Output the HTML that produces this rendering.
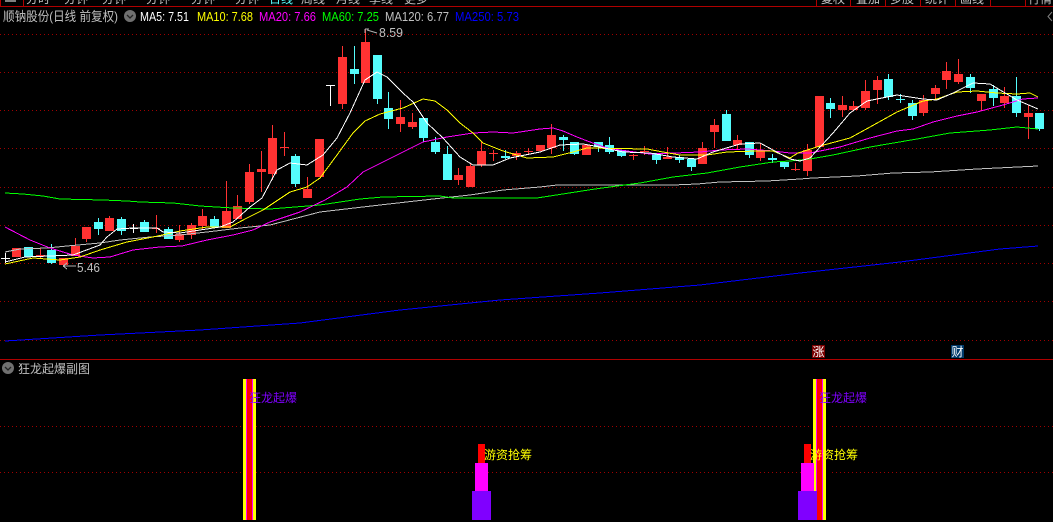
<!DOCTYPE html>
<html><head><meta charset="utf-8"><style>
html,body{margin:0;padding:0;background:#000;width:1053px;height:522px;overflow:hidden}
svg{display:block}
text{font-family:"WenQuanYi Zen Hei","Liberation Sans","Noto Sans CJK SC",sans-serif;font-size:12px}
text.m{font-family:"Liberation Sans",sans-serif;font-size:13px}
</style></head><body>
<svg width="1053" height="522" viewBox="0 0 1053 522" xmlns="http://www.w3.org/2000/svg">
<defs><pattern id="d" width="4" height="1" patternUnits="userSpaceOnUse"><rect width="1" height="1" fill="#a00000"/></pattern></defs>
<rect width="1053" height="522" fill="#000"/>
<!-- top tabs -->
<g fill="#c0c0c0" text-anchor="middle">
<text x="38" y="3">分时</text><text x="76" y="3">分钟</text><text x="114" y="3">分钟</text><text x="158" y="3">分钟</text><text x="203" y="3">分钟</text><text x="247" y="3">分钟</text>
<text x="281" y="3" fill="#54fcfc">日线</text><text x="313" y="3">周线</text><text x="348" y="3">月线</text><text x="381" y="3">季线</text><text x="416" y="3">更多</text>
<text x="833" y="3">复权</text><text x="868" y="3">叠加</text><text x="902" y="3">多股</text><text x="937" y="3">统计</text><text x="972" y="3">画线</text><text x="1040" y="3">行情</text>
</g>
<rect x="5" y="0" width="11" height="2" fill="#808080"/>
<g shape-rendering="crispEdges" fill="#b00000">
<rect x="0" y="6" width="1053" height="1"/>
<rect x="0" y="0" width="1" height="6"/><rect x="23" y="0" width="1" height="6"/>
<rect x="816" y="0" width="1" height="6"/><rect x="850" y="0" width="1" height="6"/><rect x="885" y="0" width="1" height="6"/><rect x="920" y="0" width="1" height="6"/><rect x="955" y="0" width="1" height="6"/><rect x="990" y="0" width="1" height="6"/><rect x="1025" y="0" width="1" height="6"/>
<rect x="0" y="359" width="1053" height="1"/>
</g>
<path d="M1052 12L1048 16.500L1052 21" fill="none" stroke="#808080"/>
<!-- grid -->
<g fill="url(#d)" shape-rendering="crispEdges">
<rect y="34" width="1053" height="1"/><rect y="72" width="1053" height="1"/><rect y="110" width="1053" height="1"/><rect y="148" width="1053" height="1"/><rect y="187" width="1053" height="1"/><rect y="225" width="1053" height="1"/><rect y="263" width="1053" height="1"/><rect y="301" width="1053" height="1"/><rect y="340" width="1053" height="1"/><rect y="426" width="1053" height="1"/><rect y="472" width="1053" height="1"/>
</g>
<!-- header -->
<text x="3" y="21" fill="#c0c0c0" style="font-size:13px" textLength="115" lengthAdjust="spacingAndGlyphs">顺钠股份(日线 前复权)</text>
<circle cx="130" cy="16" r="6" fill="#707070"/><path d="M127 15L130 18L133 15" stroke="#222" stroke-width="1.300" fill="none"/>
<text class="m" x="140" y="21" fill="#fff" textLength="49" lengthAdjust="spacingAndGlyphs">MA5: 7.51</text>
<text class="m" x="197" y="21" fill="#ff0" textLength="56" lengthAdjust="spacingAndGlyphs">MA10: 7.68</text>
<text class="m" x="259" y="21" fill="#f0f" textLength="57" lengthAdjust="spacingAndGlyphs">MA20: 7.66</text>
<text class="m" x="322" y="21" fill="#0f0" textLength="57" lengthAdjust="spacingAndGlyphs">MA60: 7.25</text>
<text class="m" x="385" y="21" fill="#c0c0c0" textLength="64" lengthAdjust="spacingAndGlyphs">MA120: 6.77</text>
<text class="m" x="455" y="21" fill="#0000ff" textLength="64" lengthAdjust="spacingAndGlyphs">MA250: 5.73</text>
<!-- candles -->
<g shape-rendering="crispEdges">
<path fill="none" stroke="#ff3232" d="M40.500 248V258M36 255.500H45M75.500 238V246M86.500 239V242M109.500 216V218M156.500 215V233M152 228.500H160M179.500 225V242M191.500 223V239M202.500 209V229M226.500 181V211M237.500 195V206M249.500 164V204M261.500 151V192M272.500 125V180M284.500 132V156M280 147.500H289M307.500 177V189M342.500 46V109M365.500 29V42M400.500 100V132M412.500 113V129M458.500 168V185M470.500 164V166M481.500 142V167M493.500 150V161M489 153.500H498M516.500 151V160M528.500 148V154M524 151.500H533M551.500 124V154M633.500 154V160M629 155.500H638M644.500 146V155M640 151.500H649M667.500 147V159M702.500 142V148M714.500 119V148M737.500 135V149M760.500 143V161M795.500 163V171M791 169.500H800M807.500 144V176M842.500 96V117M853.500 101V110M865.500 80V110M877.500 76V104M923.500 95V116M935.500 85V99M946.500 62V89M958.500 59V84M981.500 94V111M1004.500 87V108M1028.500 105V139"/>
<path fill="#ff3232" d="M12 248h9v9h-9zM59 258h9v7h-9zM71 246h9v10h-9zM82 227h9v12h-9zM105 218h9v13h-9zM175 234h9v6h-9zM187 225h9v10h-9zM198 216h9v10h-9zM222 211h9v17h-9zM233 206h9v13h-9zM245 172h9v30h-9zM257 169h9v3h-9zM268 138h9v36h-9zM303 189h9v9h-9zM315 139h9v38h-9zM338 57h9v47h-9zM361 42h9v41h-9zM396 117h9v7h-9zM408 122h9v5h-9zM454 175h9v5h-9zM466 166h9v21h-9zM477 151h9v14h-9zM512 153h9v3h-9zM536 145h9v6h-9zM547 135h9v13h-9zM582 145h9v10h-9zM663 157h9v2h-9zM698 148h9v16h-9zM710 125h9v7h-9zM733 140h9v5h-9zM756 150h9v8h-9zM803 150h9v21h-9zM815 96h9v51h-9zM838 105h9v5h-9zM849 106h9v4h-9zM861 91h9v17h-9zM873 80h9v10h-9zM919 100h9v13h-9zM931 88h9v6h-9zM942 71h9v9h-9zM954 74h9v8h-9zM977 94h9v7h-9zM1000 96h9v7h-9zM1024 113h9v4h-9z"/>
<path fill="none" stroke="#54fcfc" d="M28.500 247V257M51.500 244V264M98.500 218V235M121.500 217V235M144.500 220V232M168.500 227V239M214.500 216V227M295.500 154V187M354.500 46V84M377.500 99V104M388.500 92V129M423.500 138V142M435.500 137V154M447.500 146V154M505.500 150V159M563.500 135V151M574.500 154V155M598.500 147V152M609.500 137V154M621.500 156V157M656.500 160V164M679.500 155V163M691.500 167V171M726.500 110V114M749.500 155V158M772.500 154V163M784.500 167V169M830.500 98V118M888.500 74V100M900.500 94V103M896 99.500H905M912.500 100V120M970.500 74V93M993.500 85V106M1016.500 77V117M1039.500 129V131"/>
<path fill="#54fcfc" d="M24 247h9v10h-9zM47 250h9v13h-9zM94 222h9v7h-9zM117 219h9v12h-9zM140 222h9v10h-9zM164 229h9v10h-9zM210 219h9v8h-9zM291 156h9v28h-9zM350 69h9v5h-9zM373 55h9v44h-9zM384 108h9v11h-9zM419 118h9v20h-9zM431 142h9v10h-9zM443 154h9v26h-9zM501 156h9v2h-9zM559 137h9v3h-9zM570 142h9v12h-9zM594 142h9v5h-9zM605 145h9v7h-9zM617 150h9v6h-9zM652 153h9v7h-9zM675 157h9v3h-9zM687 159h9v8h-9zM722 114h9v27h-9zM745 142h9v13h-9zM768 158h9v2h-9zM780 162h9v5h-9zM826 103h9v6h-9zM884 79h9v18h-9zM908 103h9v13h-9zM966 77h9v11h-9zM989 89h9v9h-9zM1012 96h9v17h-9zM1035 113h9v16h-9z"/>
<path fill="none" stroke="#fff" d="M5.500 253V263M1 258.500H10M133.500 224V233M130 228.500H138M330.500 85V106M326 85.500H335"/>
<!-- MA lines -->
<g fill="none" stroke-width="1">
<polyline stroke="#0000ff" points="5,341 100,335 200,330 300,323 400,310 500,300 600,293 700,285 800,273 900,262 1000,249 1038,246"/>
<polyline stroke="#c0c0c0" points="5,252 20,249 47,248 67,246 100,243 120,240 150,237 180,235 207,232 240,228 270,225 320,212 380,205 433,199 470,195 503,190 540,187 557,185 613,185 673,185 697,184 720,182 767,181 800,179 813,178 857,176 893,173 930,172 977,169 1038,166"/>
<polyline stroke="#00ff00" points="5,193 23,194 43,196 60,199 103,200 127,201 140,202 173,203 200,206 233,208 270,209 320,205 360,199 383,197 440,196 453,198 537,198 595,189 617,186 640,183 673,177 707,173 740,167 773,162 790,161 810,159 833,155 870,147 917,139 950,133 990,130 1017,127 1038,129"/>
<polyline stroke="#ff00ff" points="5,227 30,240 50,248 73,255 93,258 110,257 133,250 160,247 182,246 207,240 233,235 253,230 270,222 300,212 325,200 347,187 363,172 383,162 403,152 423,142 447,137 473,133 493,132 513,133 540,129 553,128 563,131 577,137 590,142 607,148 627,151 650,154 700,152 720,150 747,149 773,151 790,153 810,153 840,147 870,138 897,131 913,129 933,122 957,116 977,112 1003,105 1023,99 1038,98"/>
<polyline stroke="#ffff00" points="5,264 33,258 60,260 80,257 100,250 127,242 153,237 180,231 207,227 230,227 247,218 263,210 278,200 290,192 307,187 320,178 337,155 353,133 365,121 380,114 403,108 423,99 435,101 447,110 460,123 473,133 483,143 503,151 527,158 553,157 573,152 587,148 647,149 663,152 680,155 707,155 727,152 757,151 773,151 790,158 798,153 820,146 850,138 870,127 897,112 923,101 937,99 957,92 977,91 997,93 1017,94 1030,93 1038,97"/>
<polyline stroke="#ffffff" points="5,262 25,257 50,256 73,255 100,245 107,237 117,229 133,228 157,228 163,232 180,233 200,230 220,227 233,222 250,207 262,198 270,183 277,170 290,163 307,165 323,155 337,138 350,113 365,80 377,72 387,77 403,93 413,102 427,123 443,138 460,157 473,165 493,165 510,158 540,152 560,145 583,144 600,147 623,152 650,153 673,157 697,159 713,152 740,144 760,143 773,150 790,159 800,161 810,158 833,133 850,113 867,101 897,95 923,99 937,100 953,93 973,83 990,84 1017,100 1038,109"/>
</g>
</g>
<!-- hi/lo labels -->
<path d="M63 266H76M63 266L67 263M63 266L67 269" stroke="#b0b0b0" fill="none" shape-rendering="crispEdges"/>
<text class="m" x="77" y="272" fill="#c0c0c0" textLength="23" lengthAdjust="spacingAndGlyphs">5.46</text>
<path d="M365 29H369M365 29V33M367 30L377 33" stroke="#b0b0b0" fill="none"/>
<text class="m" x="379" y="37" fill="#c0c0c0" textLength="24" lengthAdjust="spacingAndGlyphs">8.59</text>
<!-- badges -->
<rect x="812" y="345" width="13" height="13" fill="#7a0000"/>
<text x="818.500" y="356" fill="#fff" text-anchor="middle">涨</text>
<rect x="951" y="345" width="13" height="13" fill="#003a6a"/>
<text x="957.500" y="356" fill="#fff" text-anchor="middle">财</text>
<!-- subchart header -->
<circle cx="8" cy="368" r="6" fill="#707070"/><path d="M5 367L8 370L11 367" stroke="#222" stroke-width="1.300" fill="none"/>
<text x="18" y="373" fill="#c0c0c0" textLength="72" lengthAdjust="spacingAndGlyphs">狂龙起爆副图</text>
<!-- subchart bars -->
<g shape-rendering="crispEdges">
<rect x="243" y="379" width="13" height="141" fill="#ff0"/><rect x="246" y="379" width="7" height="141" fill="#f0f"/><rect x="247" y="379" width="5" height="141" fill="#f00"/>
<rect x="810" y="425" width="19" height="3" fill="#000"/><rect x="810" y="471" width="19" height="3" fill="#000"/>
<rect x="813" y="379" width="13" height="141" fill="#ff0"/><rect x="816" y="379" width="7" height="141" fill="#f0f"/><rect x="817" y="379" width="5" height="141" fill="#f00"/>
<rect x="478" y="444" width="7" height="20" fill="#f00"/><rect x="475" y="463" width="13" height="29" fill="#f0f"/><rect x="472" y="491" width="19" height="29" fill="#8000ff"/>
<rect x="804" y="444" width="7" height="20" fill="#f00"/><rect x="801" y="463" width="13" height="29" fill="#f0f"/><rect x="798" y="491" width="19" height="29" fill="#8000ff"/>
</g>
<text x="249" y="402" fill="#8000ff" textLength="48" lengthAdjust="spacingAndGlyphs">狂龙起爆</text>
<text x="819" y="402" fill="#8000ff" textLength="48" lengthAdjust="spacingAndGlyphs">狂龙起爆</text>
<text x="484" y="459" fill="#ff0" textLength="48" lengthAdjust="spacingAndGlyphs">游资抢筹</text>
<text x="810" y="459" fill="#ff0" textLength="48" lengthAdjust="spacingAndGlyphs">游资抢筹</text>
</svg>
</body></html>
